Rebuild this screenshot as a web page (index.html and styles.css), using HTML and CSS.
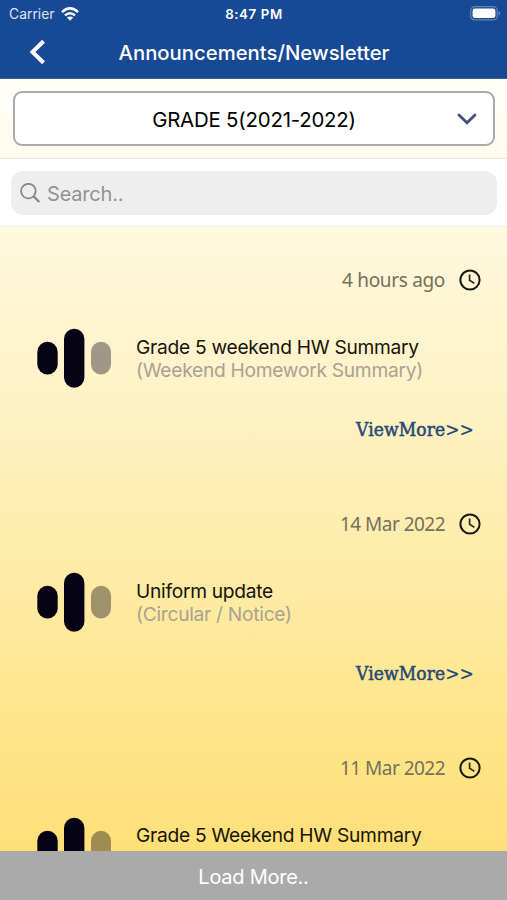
FILE: index.html
```html
<!DOCTYPE html>
<html lang="en">
<head>
<meta charset="utf-8">
<meta name="viewport" content="width=device-width, initial-scale=1">
<title>Announcements/Newsletter</title>
<link rel="stylesheet" href="styles.css">
</head>
<body>
<svg class="defs" width="0" height="0" aria-hidden="true">
  <symbol id="clock" viewBox="0 0 22 22"><circle cx="11" cy="11" r="9.6" fill="none" stroke="#1c190f" stroke-width="2"/><path d="M10.6 5.5V11.3L15.4 14.4" fill="none" stroke="#2c281c" stroke-width="1.7"/></symbol>
  <symbol id="bars" viewBox="0 0 76 60"><rect x="1.3" y="13.8" width="20.4" height="32.6" rx="10.2" fill="#050314"/><rect x="28" y="0.7" width="20.4" height="59" rx="10.2" fill="#050314"/><rect x="55" y="13.8" width="20" height="32.6" rx="10" fill="#050314" opacity=".38"/></symbol>
</svg>
<div class="app">
  <header class="header">
    <div class="status">
      <div class="carrier"><span class="carrier-name">Carrier</span>
        <svg width="18" height="14" viewBox="0 0 18 14" fill="none" stroke="#fff" stroke-width="2.5"><path d="M1 5.1Q9-2.3 17 5.1M4 8.4Q9 4 14 8.4"/><path d="M9 13.7L5.9 10.6Q9 8.3 12.1 10.6Z" fill="#fff" stroke="none"/></svg>
      </div>
      <span class="time">8:47 PM</span>
      <svg class="battery" width="31" height="15" viewBox="0 0 31 15"><rect x=".7" y=".7" width="26.6" height="13.2" rx="4" fill="none" stroke="#6484b8" stroke-width="1.2"/><rect x="2.6" y="2.6" width="22.8" height="9.4" rx="2.3" fill="#fff"/><path d="M28.7 5Q31.4 7.3 28.7 9.6Z" fill="#7893c1"/></svg>
    </div>
    <div class="nav">
      <svg class="back" width="18" height="26" viewBox="0 0 18 26"><path d="M14.5 2.2L3.5 13L14.5 23.8" fill="none" stroke="#fff" stroke-width="4"/></svg>
      <h1 class="title">Announcements/Newsletter</h1>
    </div>
  </header>
  <section class="picker">
    <div class="select"><span class="grade">GRADE 5(2021-2022)</span>
      <svg width="20" height="13" viewBox="0 0 20 13"><path d="M2 2L10 9.8L18 2" fill="none" stroke="#414f83" stroke-width="2.8" stroke-linecap="round"/></svg>
    </div>
  </section>
  <section class="search-wrap">
    <div class="search">
      <svg width="21" height="21" viewBox="0 0 21 21" fill="none" stroke="#858585" stroke-width="1.7"><circle cx="8.4" cy="8.1" r="7.3"/><path d="M13.6 13.4L19.3 19" stroke-width="2.2"/></svg>
      <span class="hint">Search..</span>
    </div>
  </section>
  <main class="list">
    <article class="item">
      <div class="when"><span class="ago">4 hours ago</span><svg width="22" height="22"><use href="#clock"/></svg></div>
      <div class="body"><svg width="76" height="60"><use href="#bars"/></svg><div class="copy"><div>Grade 5 weekend HW Summary</div><div class="kind">(Weekend Homework Summary)</div></div></div>
      <div class="more"><span>ViewMore<span class="arrows">&gt;&gt;</span></span></div>
    </article>
    <article class="item">
      <div class="when"><span class="date">14 Mar 2022</span><svg width="22" height="22"><use href="#clock"/></svg></div>
      <div class="body"><svg width="76" height="60"><use href="#bars"/></svg><div class="copy"><div>Uniform update</div><div class="kind">(Circular / Notice)</div></div></div>
      <div class="more"><span>ViewMore<span class="arrows">&gt;&gt;</span></span></div>
    </article>
    <article class="item">
      <div class="when"><span class="date">11 Mar 2022</span><svg width="22" height="22"><use href="#clock"/></svg></div>
      <div class="body"><svg width="76" height="60"><use href="#bars"/></svg><div class="copy"><div>Grade 5 Weekend HW Summary</div></div></div>
    </article>
  </main>
  <footer class="load"><span>Load More..</span></footer>
</div>
</body>
</html>
```
FILE: styles.css
```css
* { box-sizing: border-box; }
body { margin: 0; font-family: Inter, "Liberation Sans", sans-serif; }
.defs { position: absolute; }
svg { display: block; flex: none; }
.app { width: 507px; height: 900px; display: flex; flex-direction: column; overflow: hidden; background: linear-gradient(#fffef8 0, #fffef8 90px, #fffced 158px, #fff8df 228px, #fef0bd 450px, #fee794 675px, #fee077 850px); }
.header { height: 79px; flex: none; background: #184994; color: #fff; border-bottom: 1px solid #386097; }
.status { height: 27px; display: grid; grid-template-columns: 1fr auto 1fr; align-items: center; padding: 0 8px 0 9px; }
.carrier { display: flex; align-items: center; gap: 6px; font-size: 13.8px; letter-spacing: .05px; color: #dce5f3; }
.time { font-size: 13.3px; font-weight: 600; letter-spacing: .6px; }
.battery { justify-self: end; margin-right: -2px; }
.nav { height: 51px; display: grid; grid-template-columns: 90px 1fr 90px; align-items: center; }
.back { margin: -2px 0 0 29px; }
.title { margin: -1px 0 0 1px; text-align: center; font-size: 20.3px; font-weight: 550; letter-spacing: 0; white-space: nowrap; }
.picker { height: 80px; flex: none; padding: 12px 12px 0 13px; border-bottom: 1px solid #e9eadb; }
.select { height: 55px; border: 2px solid #aaa; border-radius: 9px; background: #fff; display: grid; grid-template-columns: 50px 1fr 50px; align-items: center; }
.grade { grid-column: 2; text-align: center; font-size: 20.4px; letter-spacing: -.2px; padding-top: 1px; }
.select svg { justify-self: center; margin: 2px 2px 0 0; }
.search-wrap { height: 68px; flex: none; background: #fff; padding: 12px 10px 0 11px; border-bottom: 1px solid #f0eedc; }
.search { height: 44px; background: #eee; border-radius: 12px; display: flex; align-items: center; gap: 6px; padding: 0 9px; color: #929292; font-size: 20px; letter-spacing: -.2px; }
.hint { padding-top: 1px; }
.list { flex: 1; min-height: 0; overflow: hidden; padding-top: 36.5px; }
.item { height: 244.3px; display: flow-root; }
.when { height: 32px; display: flex; align-items: center; justify-content: flex-end; gap: 14px; padding-right: 26px; font: 19px/32px "Noto Sans", sans-serif; color: #77705b; }
.ago { letter-spacing: -.33px; }
.date { letter-spacing: -.53px; }
.body { height: 60px; margin-top: 32.5px; padding-left: 36px; display: flex; gap: 24px; align-items: center; font-size: 19.2px; letter-spacing: -.28px; line-height: 23.3px; color: #17140b; }
.copy { height: 45px; white-space: nowrap; }
.kind { color: #a9a295; }
.more { height: 30px; margin-top: 25.5px; padding-right: 33px; text-align: right; font: 19px/30px "DejaVu Serif Condensed", "DejaVu Serif", serif; font-stretch: condensed; letter-spacing: .1px; color: #264975; -webkit-text-stroke: .5px #264975; }
.arrows { -webkit-text-stroke-width: .1px; }
.load { height: 49px; flex: none; background: #aaa; color: #fff; display: flex; justify-content: center; align-items: center; font-size: 20px; letter-spacing: -.25px; padding-top: 2px; }
```
